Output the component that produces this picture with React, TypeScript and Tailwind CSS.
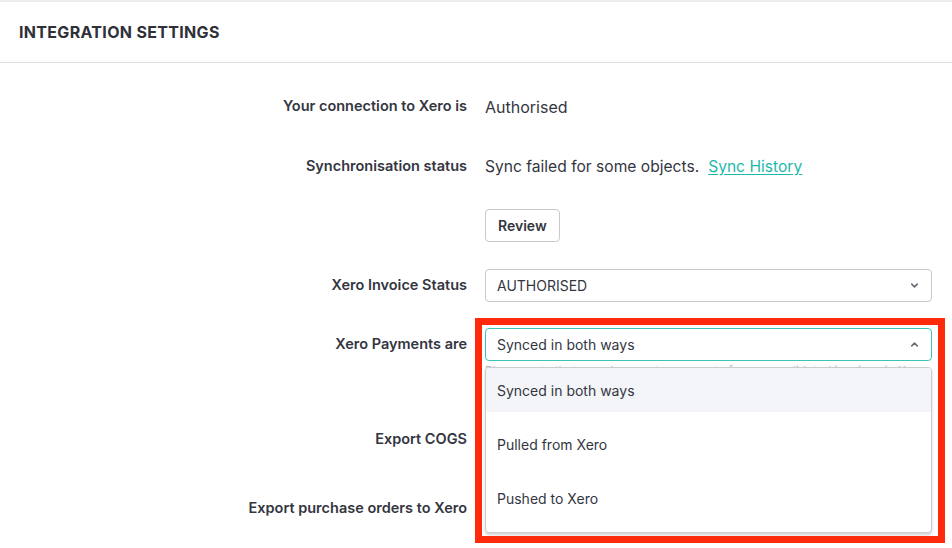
import { ChevronDown, ChevronUp } from "lucide-react";

const font = { fontFamily: "Inter, 'Noto Sans', sans-serif" };

function Label({ children }: { children: React.ReactNode }) {
  return (
    <div className="w-[467px] flex-shrink-0 text-right text-[14.5px] font-semibold text-[#34363f] leading-none">
      {children}
    </div>
  );
}

export default function App() {
  return (
    <div className="w-[952px] h-[548px] bg-white overflow-hidden relative" style={font}>
      {/* Header */}
      <div className="h-[63px] border-t-2 border-[#ececee] border-b border-b-[#dfdfe5] flex items-center px-[19px]">
        <span className="text-[16px] font-bold tracking-[0.02em] text-[#2f3038]">INTEGRATION SETTINGS</span>
      </div>

      {/* Form */}
      <div className="pr-[20px]">
        <div className="flex items-center h-[33px] mt-[27px]">
          <Label>Your connection to Xero is</Label>
          <div className="pl-[18px] text-[16px] text-[#34363f]">Authorised</div>
        </div>

        <div className="flex items-center h-[33px] mt-[27px]">
          <Label>Synchronisation status</Label>
          <div className="pl-[18px] text-[15.6px] text-[#34363f]">
            Sync failed for some objects.
            <a className="ml-[9px] text-[#1db9aa] underline underline-offset-2 cursor-pointer">Sync History</a>
          </div>
        </div>

        <div className="flex items-center h-[33px] mt-[26px]">
          <div className="w-[467px] flex-shrink-0" />
          <div className="pl-[18px]">
            <button className="h-[33px] px-[12px] border border-[#c7c8d0] rounded-[4px] text-[14px] font-semibold text-[#34363f] bg-white">
              Review
            </button>
          </div>
        </div>

        <div className="flex items-center h-[33px] mt-[27px]">
          <Label>Xero Invoice Status</Label>
          <div className="pl-[18px] flex-1">
            <div className="h-[33px] border border-[#c7c8d0] rounded-[4px] flex items-center justify-between pl-[11px] pr-[11px] text-[14px] text-[#34363f]">
              <span>AUTHORISED</span>
              <ChevronDown size={11} strokeWidth={3.5} className="text-[#6b6d78]" />
            </div>
          </div>
        </div>

        <div className="flex items-start mt-[26px]">
          <div className="w-[467px] flex-shrink-0 h-[33px] flex items-center justify-end">
            <span className="text-[14.5px] font-semibold text-[#34363f] leading-none">Xero Payments are</span>
          </div>
          <div className="pl-[18px] flex-1">
            <div className="relative">
              <div className="h-[33px] border border-[#3cc3b5] rounded-[4px] flex items-center justify-between pl-[11px] pr-[11px] text-[14px] text-[#34363f]">
                <span>Synced in both ways</span>
                <ChevronUp size={11} strokeWidth={3.5} className="text-[#6b6d78]" />
              </div>
              <div className="mt-[2px] text-[12px] leading-[16px] text-[#b9bac2] whitespace-nowrap overflow-hidden">
                Please note that any changes to payments from consolidated invoices in Xero
              </div>

              {/* Dropdown menu */}
              <div className="absolute left-0 right-0 top-[39px] z-10 bg-white border border-[#cbccd3] rounded-[4px] shadow-[0_2px_3px_rgba(0,0,0,0.18)] overflow-hidden text-[14px] text-[#34363f]">
                <div className="h-[44px] bg-[#f4f5f9] flex items-center px-[11px]">Synced in both ways</div>
                <div className="pt-[5px] pb-[7px]">
                  <div className="h-[54px] flex items-center px-[11px]">Pulled from Xero</div>
                  <div className="h-[54px] flex items-center px-[11px]">Pushed to Xero</div>
                </div>
              </div>

              {/* Annotation frame */}
              <div className="absolute left-[-10px] right-[-13px] top-[-10px] h-[225px] z-20 border-[7px] border-[#ff2a0a] pointer-events-none" />
            </div>
          </div>
        </div>

        <div className="flex items-center h-[33px] mt-[44px]">
          <Label>Export COGS</Label>
        </div>

        <div className="flex items-center h-[33px] mt-[36px]">
          <Label>Export purchase orders to Xero</Label>
        </div>
      </div>
    </div>
  );
}
